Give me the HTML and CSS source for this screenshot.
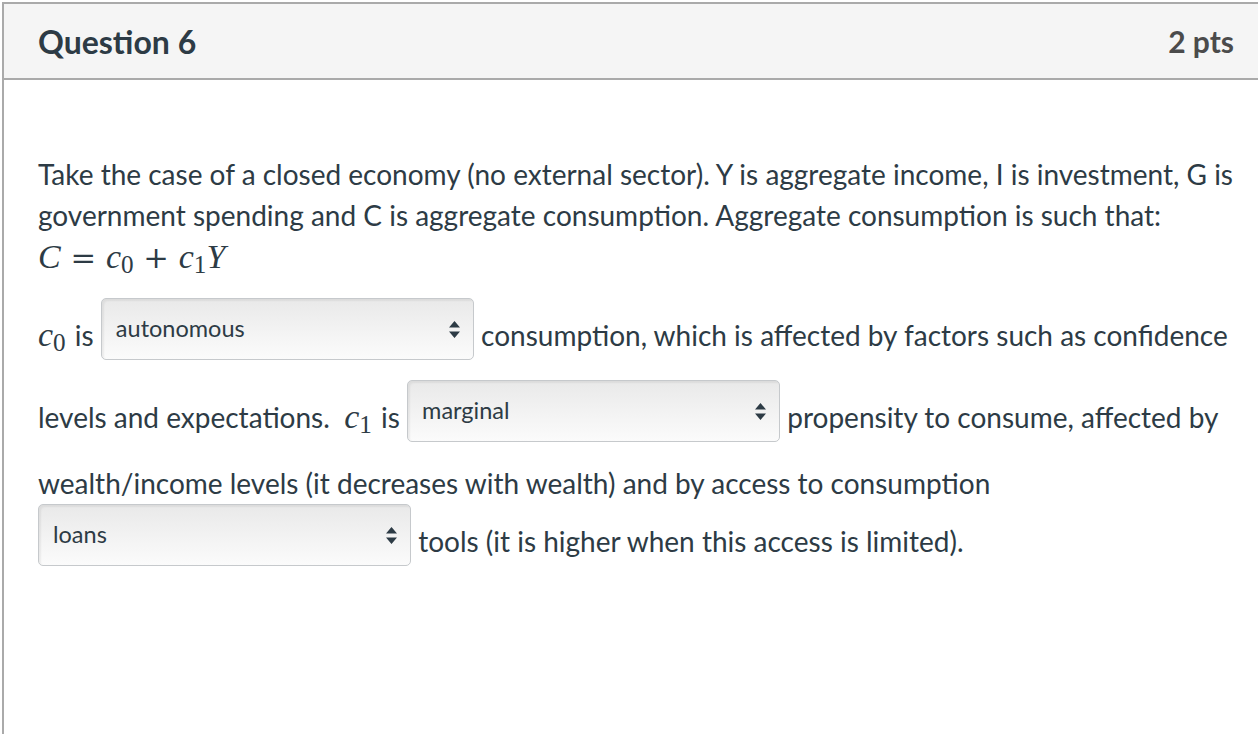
FILE: index.html
```html
<!DOCTYPE html>
<html lang="en">
<head>
<meta charset="utf-8">
<title>Question 6</title>
<link rel="stylesheet" href="styles.css">
</head>
<body>
<div class="question">
  <div class="q-header">
    <h2 class="q-title">Question 6</h2>
    <div class="q-points">2 pts</div>
  </div>
  <div class="q-body">
    <p class="q-text q-intro">Take the case of a closed economy (no external sector). Y is aggregate income, I is investment, G is government spending and C is aggregate consumption. Aggregate consumption is such that:<br><span class="math"><i>C</i><span class="op">=</span><i>c</i><sub>0</sub><span class="op">+</span><i>c</i><sub>1</sub><i>Y</i></span></p>
    <p class="q-text q-fill"><span class="math small"><i>c</i><sub>0</sub></span> is <span class="select"><span class="select-label">autonomous</span><svg class="arrows" width="11" height="17" viewBox="0 0 11 17"><path d="M5.5 0 L11 6.5 L0 6.5 Z M0 10.5 L11 10.5 L5.5 17 Z" fill="#2d3b45"/></svg></span> consumption, which is affected by factors such as confidence levels and expectations. &nbsp;<span class="math small"><i>c</i><sub>1</sub></span> is <span class="select"><span class="select-label">marginal</span><svg class="arrows" width="11" height="17" viewBox="0 0 11 17"><path d="M5.5 0 L11 6.5 L0 6.5 Z M0 10.5 L11 10.5 L5.5 17 Z" fill="#2d3b45"/></svg></span> propensity to consume, affected by wealth/income levels (it decreases with wealth) and by access to consumption <span class="select"><span class="select-label">loans</span><svg class="arrows" width="11" height="17" viewBox="0 0 11 17"><path d="M5.5 0 L11 6.5 L0 6.5 Z M0 10.5 L11 10.5 L5.5 17 Z" fill="#2d3b45"/></svg></span> tools (it is higher when this access is limited).</p>
  </div>
</div>
</body>
</html>
```

FILE: styles.css
```css
html, body {
  margin: 0;
  padding: 0;
  overflow: hidden;
  background: #ffffff;
}

body {
  font-family: Lato, "Open Sans", sans-serif;
  color: #2d3b45;
}

.question {
  margin: 2px 0 0 2px;
  width: 1270px;
  height: 900px;
  border: 2px solid #aaaaaa;
  box-sizing: border-box;
}

.q-header {
  height: 74px;
  background: #f5f5f5;
  border-bottom: 2px solid #aaaaaa;
  box-sizing: content-box;
  display: flex;
  align-items: center;
  justify-content: space-between;
  padding: 0 34px 0 34px;
  width: 1196px;
}

.q-title {
  margin: 0;
  font-size: 32px;
  font-weight: 700;
  color: #2d3b45;
}

.q-points {
  font-size: 30px;
  font-weight: 700;
  color: #4b4b4b;
}

.q-body {
  padding: 74px 34px 0 34px;
  width: 1200px;
}

.q-text {
  margin: 0;
  font-size: 28px;
  line-height: 41px;
}

.q-intro {
  margin-bottom: 20px;
}

.math {
  font-family: "Liberation Serif", "DejaVu Serif", serif;
  font-size: 34px;
  white-space: nowrap;
}

.math.small {
  font-size: 34px;
  margin-right: 2px;
}

.math i {
  font-style: italic;
}

.math sub {
  font-style: normal;
  font-size: 0.74em;
  vertical-align: -0.2em;
  line-height: 0;
}

.math .op {
  font-family: "DejaVu Serif", serif;
  font-size: 0.9em;
  margin: 0 0.32em;
  font-style: normal;
}

.q-fill {
  line-height: 42px;
}

.select {
  display: inline-flex;
  align-items: center;
  justify-content: space-between;
  box-sizing: border-box;
  width: 373px;
  height: 62px;
  margin-bottom: 20px;
  padding: 0 13px 0 14px;
  vertical-align: middle;
  border: 1px solid #c6c9cc;
  border-radius: 5px;
  background: linear-gradient(to bottom, #e9e9e9 0%, #f4f4f4 60%, #fbfbfb 100%);
  box-shadow: inset 2px 2px 2px rgba(0, 0, 0, 0.06);
  font-family: Lato, "Open Sans", sans-serif;
  font-size: 23.5px;
  line-height: 24px;
  color: #2d3b45;
}

.select-label {
  position: relative;
  top: -1px;
}

.arrows {
  display: block;
  flex: none;
}
```
